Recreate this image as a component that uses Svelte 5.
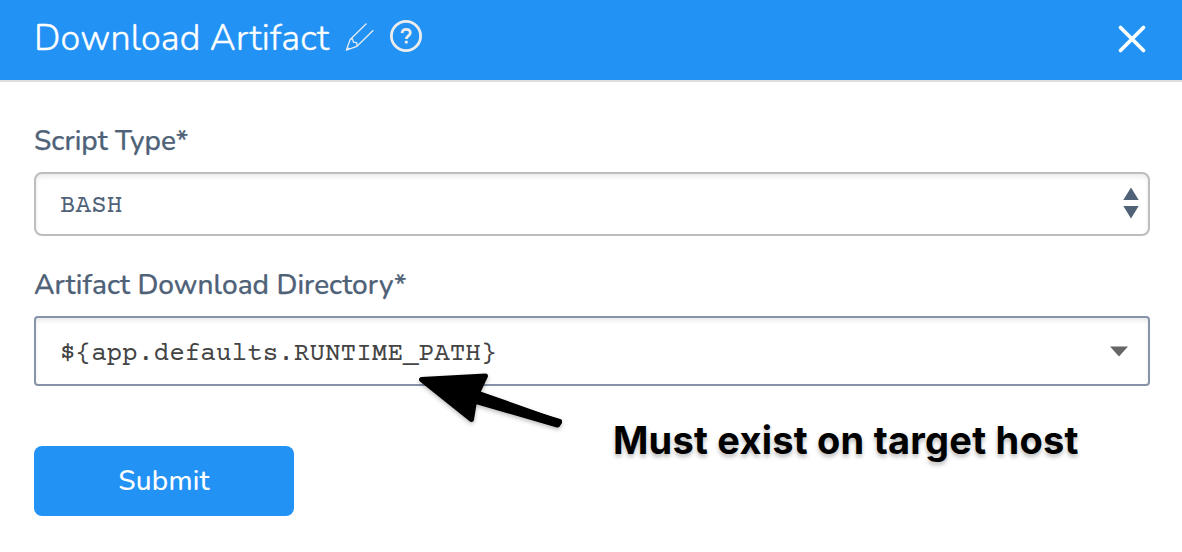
<script>
  let scriptType = 'BASH';
  let directory = '${app.defaults.RUNTIME_PATH}';
</script>

<div class="dialog">
  <header>
    <h1><span>Download Artifact</span></h1>
    <svg class="pencil" width="32" height="32" viewBox="0 0 32 32" aria-hidden="true">
      <path d="M24.5 4.5 8.2 20.5 4.3 31.2 15 27.3 31.3 11.2M8.2 20.5l2.3-.5 1 3.2 3.2.4.3 3.7M5.3 28.4l2 1.7" />
    </svg>
    <svg class="help" width="34" height="34" viewBox="0 0 34 34" aria-hidden="true">
      <circle cx="17" cy="17" r="14.6" />
      <path d="M13 14.1c.3-2.4 1.8-3.7 4.1-3.7 2.5 0 4.2 1.3 4.2 3.4 0 3-3.9 3-3.9 6.1" />
      <rect x="15.9" y="21.8" width="2.8" height="2.6" rx=".5" />
    </svg>
    <svg class="close" width="30" height="30" viewBox="0 0 30 30" aria-label="Close">
      <path d="M3.5 3.5 26.5 26.5M26.5 3.5 3.5 26.5" />
    </svg>
  </header>

  <main>
    <div class="label first"><span>Script Type*</span></div>
    <div class="field select">
      <span>{scriptType}</span>
      <svg width="16" height="32" viewBox="0 0 16 32" aria-hidden="true">
        <path d="M8 .5 15.7 13H.3zM.3 19h15.4L8 31.5z" />
      </svg>
    </div>

    <div class="label second"><span>Artifact Download Directory*</span></div>
    <div class="field combo">
      <span>{directory}</span>
      <svg width="18" height="11" viewBox="0 0 18 11" aria-hidden="true">
        <path d="M0 .5h18L9 10.5z" />
      </svg>
    </div>

    <button><span>Submit</span></button>
  </main>

  <svg class="arrow" width="160" height="80" viewBox="0 0 160 80" aria-hidden="true">
    <path d="M10.5 19.5 74.5 16 66.5 33 148.5 62 146.5 65 63.5 41 60.5 59.5z" />
    <path class="shaft" d="M50 32 148.5 61.5 146.5 64.5 55 37z" />
  </svg>
  <div class="note">Must exist on target host</div>
</div>

<style>
  :global(body) { background: #fff; }
  .dialog {
    position: relative;
    width: 1182px;
    height: 552px;
    overflow: hidden;
    box-sizing: border-box;
    background: #fff;
    font-family: Nunito, Lato, sans-serif;
  }
  header {
    display: flex;
    align-items: center;
    box-sizing: border-box;
    height: 82px;
    padding: 0 35px 4px 34px;
    background: #2392f5;
    border-bottom: 2px solid #dedede;
  }
  h1 {
    width: 308px;
    margin: 2px 0 0;
    color: #fff;
    font-size: 36px;
    line-height: 48px;
    font-weight: 300;
    letter-spacing: .16px;
    -webkit-text-stroke: .4px #fff;
    white-space: nowrap;
  }
  .pencil { fill: none; stroke: #e8edf2; stroke-width: 1.25; stroke-linejoin: round; margin-top: -6px; }
  .help { margin: -4px 0 0 15px; fill: none; stroke: #ececec; stroke-width: 2.8; }
  .help rect { fill: #ececec; stroke: none; }
  .close { margin-left: auto; margin-top: 2px; fill: none; stroke: #fff; stroke-width: 3.8; stroke-linecap: round; }
  main { padding: 0 32px 0 34px; }
  .label {
    color: #4f6278;
    font-size: 28px;
    line-height: 36px;
    font-weight: 500;
    letter-spacing: .04px;
    -webkit-text-stroke: .25px #4f6278;
    white-space: nowrap;
  }
  .first { padding-top: 41px; }
  .second { padding-top: 31px; }
  .field {
    display: flex;
    align-items: center;
    justify-content: space-between;
    box-sizing: border-box;
    font-family: "Courier Prime", "Nimbus Mono PS", FreeMono, "Liberation Mono", monospace;
    font-size: 26px;
    line-height: 32px;
    box-shadow: inset 0 3px 4px #00000014;
  }
  .field span { padding-top: 5px; }
  .select {
    height: 64px;
    margin-top: 13px;
    padding: 0 9px 0 24px;
    border: 2px solid #bdbdbd;
    border-radius: 8px;
    color: #4f6278;
  }
  .select svg { fill: #4f6278; margin-top: -2px; }
  .combo {
    height: 70px;
    margin-top: 13px;
    padding: 2px 20px 0 24px;
    border: 2px solid #8793aa;
    border-radius: 4px;
    color: #444;
  }
  .combo svg { fill: #666; margin-top: -2px; }
  button {
    display: block;
    width: 260px;
    height: 70px;
    margin-top: 60px;
    padding: 0;
    border: 0;
    border-radius: 8px;
    background: #2392f5;
    color: #fff;
    font: 500 28px/36px Nunito, Lato, sans-serif;
    letter-spacing: .2px;
  }
  .arrow {
    position: absolute;
    left: 411px;
    top: 360px;
    stroke: #000;
    stroke-width: 5;
    stroke-linejoin: round;
    filter: drop-shadow(0 2px 2px #0004);
  }
  .note {
    position: absolute;
    left: 613px;
    top: 416px;
    color: #000;
    font: 700 38px/48px Inter, sans-serif;
    letter-spacing: .22px;
    white-space: nowrap;
    text-shadow: 0 3px 4px #0004;
  }
</style>
